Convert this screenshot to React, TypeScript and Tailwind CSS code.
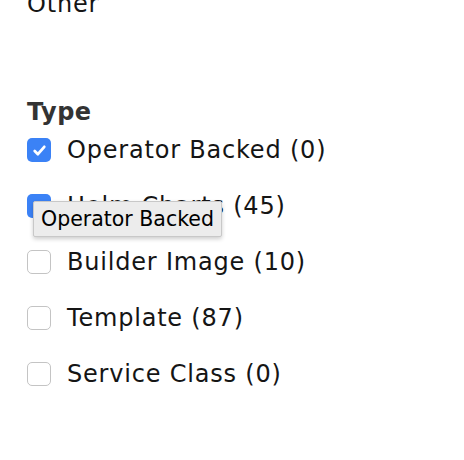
import React from "react";

const items = [
  { label: "Operator Backed (0)", checked: true },
  { label: "Helm Charts (45)", checked: true },
  { label: "Builder Image (10)", checked: false },
  { label: "Template (87)", checked: false },
  { label: "Service Class (0)", checked: false },
];

function Box({ checked }: { checked: boolean }) {
  if (checked) {
    return (
      <div className="w-[24px] h-[24px] rounded-[5px] bg-[#3b82f6] flex items-center justify-center shrink-0">
        <svg width="17" height="17" viewBox="0 0 16 16" fill="none">
          <path d="M3.5 8.5 L6.5 11.5 L12.5 4.5" stroke="white" strokeWidth="2.6" strokeLinecap="round" strokeLinejoin="round" />
        </svg>
      </div>
    );
  }
  return <div className="w-[24px] h-[24px] rounded-[5px] border border-[#c4c4c4] bg-white shrink-0" />;
}

export default function App() {
  return (
    <div className="w-[464px] h-[460px] bg-white overflow-hidden relative text-[#151515]" style={{ fontFamily: '"DejaVu Sans", sans-serif' }}>
      <div className="pl-[27px] -mt-[12px] text-[24px] leading-[32px] tracking-[0.8px]">Other</div>
      <div className="pl-[27px] mt-[76px] text-[24px] leading-[32px] font-bold text-[#333] tracking-[0.5px]">Type</div>
      <div className="pl-[27px] flex flex-col gap-[24px] mt-[6px]">
        {items.map((it, i) => (
          <div key={i} className="flex items-center gap-[16px] h-[32px] relative">
            <Box checked={it.checked} />
            <span className="text-[24px] leading-[32px] tracking-[0.8px]">{it.label}</span>
            {i === 1 && (
              <div
                className="absolute left-[6px] top-[11px] h-[36px] px-[7px] flex items-center bg-[#ececec] border border-[#c8c8c8] rounded-[2px] shadow-[0_2px_4px_rgba(0,0,0,0.2)] text-[20.5px] text-black"
                style={{ fontFamily: '"DejaVu Sans", sans-serif' }}
              >
                Operator Backed
              </div>
            )}
          </div>
        ))}
      </div>
    </div>
  );
}
